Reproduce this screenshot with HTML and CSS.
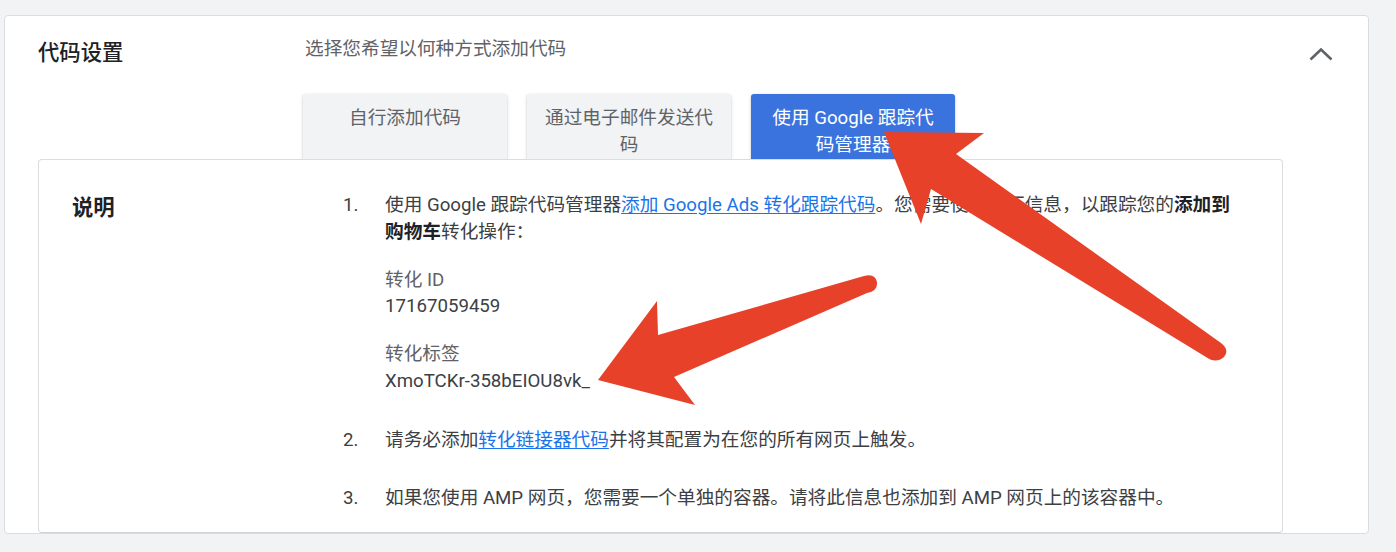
FILE: index.html
```html
<!DOCTYPE html>
<html lang="zh-CN">
<head>
    <meta charset="UTF-8">
    <meta name="viewport" content="width=device-width, initial-scale=1.0">
    <title>代码设置</title>
    <link rel="stylesheet" href="styles.css">
</head>
<body>
    <div class="page">
        <div class="card">
            <div class="card-header">
                <h2 class="card-title">代码设置</h2>
                <div class="setup">
                    <p class="setup-hint">选择您希望以何种方式添加代码</p>
                    <div class="tabs">
                        <div class="tab">自行添加代码</div>
                        <div class="tab">通过电子邮件发送代码</div>
                        <div class="tab active">使用 Google 跟踪代码管理器</div>
                    </div>
                </div>
                <button class="collapse" aria-label="收起">
                    <svg viewBox="0 0 24 13">
                        <polyline points="1.5,11.5 12,1.5 22.5,11.5"/>
                    </svg>
                </button>
            </div>

            <div class="panel">
                <h3 class="panel-label">说明</h3>
                <ol class="steps">
                    <li>
                        <span class="num">1.</span>
                        <div>
                            <p>使用 Google 跟踪代码管理器<a href="#">添加 Google Ads 转化跟踪代码</a>。您需要使用以下信息，以跟踪您的<b>添加到购物车</b>转化操作：</p>
                            <div class="field">
                                <div class="field-label">转化 ID</div>
                                <div class="field-value">17167059459</div>
                            </div>
                            <div class="field">
                                <div class="field-label">转化标签</div>
                                <div class="field-value">XmoTCKr-358bEIOU8vk_</div>
                            </div>
                        </div>
                    </li>
                    <li>
                        <span class="num">2.</span>
                        <p>请务必添加<a href="#">转化链接器代码</a>并将其配置为在您的所有网页上触发。</p>
                    </li>
                    <li>
                        <span class="num">3.</span>
                        <p>如果您使用 AMP 网页，您需要一个单独的容器。请将此信息也添加到 AMP 网页上的该容器中。</p>
                    </li>
                </ol>
            </div>
        </div>
    </div>

    <!-- annotation arrows drawn over the screenshot -->
    <svg class="marks" viewBox="0 0 1396 552">
        <path d="M884 132 L984 133 L956 154 L1221 343 Q1230 350 1224 357 Q1216 364 1206 357 L931 189 L921 224 Z"/>
        <path d="M598 380 L657 301 L658 335 L864 276 Q875 273 877 282 Q878 291 867 293 L674 377 L695 405 Z"/>
    </svg>
</body>
</html>
```

FILE: styles.css
```css
:root {
    --bg-color: #f1f3f4;
    --card-bg: #ffffff;
    --border-color: #dadce0;
    --title-color: #202124;
    --text-color: #3c4043;
    --muted-color: #5f6368;
    --link-color: #1a73e8;
    --tab-bg: #f1f3f4;
    --tab-active: #3b73de;
    --mark-color: #e8412a;
}

body {
    margin: 0;
    background-color: var(--bg-color);
    font-family: Roboto, "Noto Sans CJK SC", sans-serif;
    color: var(--text-color);
}
p {
    margin: 0;
}
.page {
    padding: 15px 27px 0 4px;
}
.card {
    background-color: var(--card-bg);
    border: 1px solid var(--border-color);
    border-radius: 4px;
}
.card-header {
    display: flex;
    align-items: flex-start;
    padding: 20px 35px 0 33px;
}
.card-title {
    width: 267px;
    flex: none;
    margin: 0;
    font-size: 21.33px;
    font-weight: 500;
    line-height: 34px;
    color: var(--title-color);
}
.setup {
    flex: 1;
}
.setup-hint {
    font-size: 18.67px;
    line-height: 26px;
    color: var(--muted-color);
}
.tabs {
    display: flex;
    gap: 20px;
    margin: 32px 0 0 -2px;
}
.tab {
    width: 204px;
    height: 66px;
    box-sizing: border-box;
    padding: 11px 14px 0;
    background-color: var(--tab-bg);
    border-radius: 3px 3px 0 0;
    box-shadow: 0 1px 3px rgba(60, 64, 67, 0.3);
    font-size: 18.67px;
    line-height: 26.67px;
    text-align: center;
    color: var(--muted-color);
}
.tab.active {
    background-color: var(--tab-active);
    color: #ffffff;
}
.collapse {
    margin: 12px 0 0 auto;
    padding: 0;
    border: none;
    background: none;
    width: 24px;
    height: 13px;
}
.collapse svg {
    display: block;
    width: 24px;
    height: 13px;
    fill: none;
    stroke: var(--muted-color);
    stroke-width: 2.6;
}
.panel {
    position: relative;
    display: flex;
    margin: -1px 85px 0 33px;
    padding: 32px 44px 20px 33px;
    background-color: var(--card-bg);
    border: 1px solid var(--border-color);
    border-bottom-color: #d0d2d6;
    border-radius: 4px;
}
.panel-label {
    width: 271px;
    flex: none;
    margin: 0;
    padding-top: 3px;
    font-size: 21.33px;
    font-weight: 700;
    line-height: 26.67px;
    color: var(--title-color);
}
.steps {
    flex: 1;
    list-style: none;
    margin: 0;
    padding: 0;
    font-size: 18.67px;
    line-height: 26.67px;
}
.steps li {
    display: grid;
    grid-template-columns: 42px 1fr;
}
.steps li + li {
    margin-top: 32px;
}
.steps a {
    color: var(--link-color);
    text-decoration: underline;
    text-underline-offset: 2px;
}
.steps b {
    font-weight: 700;
    color: var(--title-color);
}
.field {
    margin-top: 21.33px;
}
.field-label {
    color: var(--muted-color);
}
.marks {
    position: absolute;
    top: 0;
    left: 0;
    width: 1396px;
    height: 552px;
    pointer-events: none;
}
.marks path {
    fill: var(--mark-color);
}
```
